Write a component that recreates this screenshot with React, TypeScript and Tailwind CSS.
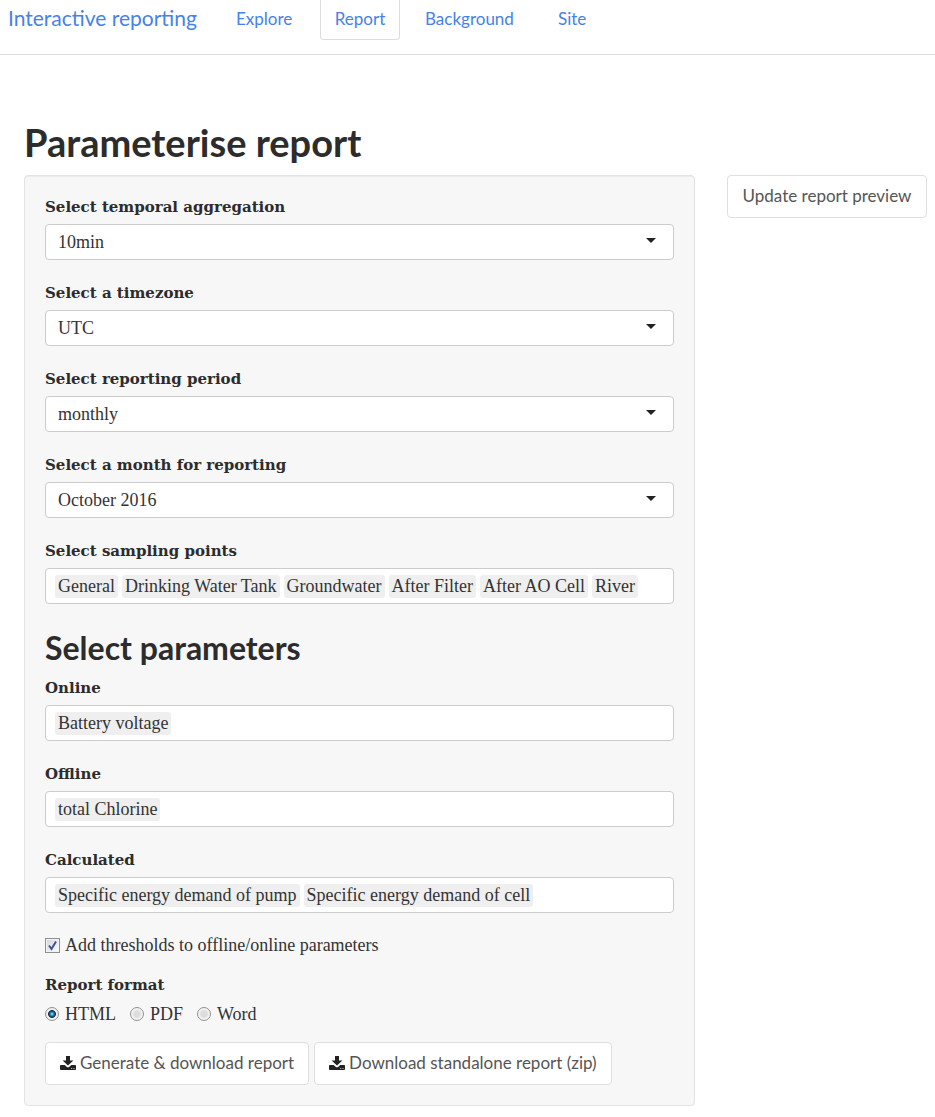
import { useState } from 'react';
import type { ReactNode } from 'react';

const sans = "font-['Lato','Open_Sans',sans-serif]";
const boxStyle = 'rounded-[4px] border border-[#cccccc] bg-white';
const labelStyle = "block font-['DejaVu_Serif',serif] text-[15px] leading-6 font-bold text-[#2c2c2c]";

function SelectField({ id, label, options }: { id: string; label: string; options: string[] }) {
  return (
    <div>
      <label htmlFor={id} className={labelStyle}>{label}</label>
      <div className="relative mt-[5px]">
        <select id={id} className={`block h-9 w-full appearance-none pr-8 pl-3 text-[18px] text-[#333333] ${boxStyle}`}>
          {options.map((o) => <option key={o}>{o}</option>)}
        </select>
        <svg className="pointer-events-none absolute top-3.5 right-[18px]" width="10" height="5" viewBox="0 0 10 5" aria-hidden="true">
          <path d="M0 0h10L5 5z" fill="#222222" />
        </svg>
      </div>
    </div>
  );
}

function TagField({ id, label, tags }: { id: string; label: string; tags: string[] }) {
  return (
    <div>
      <label htmlFor={id} className={labelStyle}>{label}</label>
      <div className={`mt-[5px] flex min-h-9 flex-wrap items-center gap-1 py-1 pr-2 pl-[9px] ${boxStyle}`}>
        {tags.map((t) => (
          <span key={t} className="rounded-[3px] bg-[#efefef] px-[3px] text-[18px] leading-[23px] whitespace-nowrap text-[#333333]">{t}</span>
        ))}
        <input id={id} type="text" className="h-5 w-1 min-w-0 flex-1 bg-transparent outline-none" />
      </div>
    </div>
  );
}

function DownloadIcon() {
  return (
    <svg width="16" height="14" viewBox="0 0 16 14" aria-hidden="true" className="shrink-0">
      <path fill="#222222" d="M6 0h4v4.500h3.400L8 9.600 2.600 4.500H6z" />
      <path fill="#222222" fillRule="evenodd" d="M.8 9h3.900l1.900 1.700a2.100 2.100 0 0 0 2.800 0L11.300 9h3.900c.4 0 .8.4.8.8v3.400c0 .4-.4.8-.8.8H.8a.8.8 0 0 1-.8-.8V9.800C0 9.400.4 9 .8 9zM11.200 12v.8h1V12zM13.500 12v.8h1V12z" />
    </svg>
  );
}

function Button({ children }: { children: ReactNode }) {
  return (
    <button type="button" className={`flex h-[43px] items-center justify-center gap-1 rounded-[4px] border border-[#dfdfdf] bg-white px-3.5 pb-0.5 text-[17px] whitespace-nowrap text-[#555555] ${sans}`}>
      {children}
    </button>
  );
}

export default function App() {
  const [thresholds, setThresholds] = useState(true);
  const [format, setFormat] = useState('HTML');

  return (
    <div className="min-h-screen bg-white pb-3 font-['Liberation_Serif',serif] text-[#333333]">
      <nav className={`flex h-[55px] items-start border-b border-[#dddddd] pl-2 text-[#4582ec] ${sans}`}>
        <a href="#home" className="w-[212px] text-[21px] leading-[35px] whitespace-nowrap">Interactive reporting</a>
        <a href="#explore" className="w-[100px] px-4 text-[17px] leading-[37px]">Explore</a>
        <a href="#report" className="h-10 w-20 rounded-b-[4px] border border-t-0 border-[#dddddd] text-center text-[17px] leading-[37px]">Report</a>
        <a href="#background" className="ml-[9px] w-[133px] px-4 text-[17px] leading-[37px]">Background</a>
        <a href="#site" className="px-4 text-[17px] leading-[37px]">Site</a>
      </nav>

      <main className="pt-16 pr-2 pl-6">
        <h1 className={`text-[38px] leading-[46px] font-bold text-[#2c2c2c] ${sans}`}>Parameterise report</h1>
        <div className="mt-2.5 grid grid-cols-[1fr_200px] items-start gap-8">
          <form className="rounded-[4px] border border-[#e3e3e3] bg-[#f7f7f7] p-5 pt-[19px] shadow-[inset_0_1px_1px_rgba(0,0,0,0.05)]">
            <div className="flex flex-col gap-[21px]">
              <SelectField id="aggregation" label="Select temporal aggregation" options={['10min', 'hourly', 'daily']} />
              <SelectField id="timezone" label="Select a timezone" options={['UTC', 'CET']} />
              <SelectField id="period" label="Select reporting period" options={['monthly', 'yearly']} />
              <SelectField id="month" label="Select a month for reporting" options={['October 2016', 'September 2016']} />
              <TagField id="points" label="Select sampling points" tags={['General', 'Drinking Water Tank', 'Groundwater', 'After Filter', 'After AO Cell', 'River']} />
            </div>

            <h2 className={`mt-6 text-[32px] leading-10 font-bold text-[#2c2c2c] ${sans}`}>Select parameters</h2>
            <div className="mt-2 flex flex-col gap-[21px]">
              <TagField id="online" label="Online" tags={['Battery voltage']} />
              <TagField id="offline" label="Offline" tags={['total Chlorine']} />
              <TagField id="calculated" label="Calculated" tags={['Specific energy demand of pump', 'Specific energy demand of cell']} />
            </div>

            <label className="mt-5 flex items-center gap-[5px] text-[18px] leading-6">
              <span className="relative flex">
                <input
                  type="checkbox"
                  checked={thresholds}
                  onChange={(e) => setThresholds(e.target.checked)}
                  className="peer size-[15px] appearance-none border border-[#8e8f8f] bg-linear-to-br from-[#cfd4da] to-white shadow-[inset_0_0_0_1px_#f4f4f4]"
                />
                <svg className="pointer-events-none absolute inset-0 hidden peer-checked:block" width="15" height="15" viewBox="0 0 15 15" aria-hidden="true">
                  <path d="M4 7.500L6.500 11 11 3.500" fill="none" stroke="#40529c" strokeWidth="2" />
                </svg>
              </span>
              Add thresholds to offline/online parameters
            </label>

            <fieldset className="mt-4">
              <legend className={labelStyle}>Report format</legend>
              <div className="mt-[5px] flex gap-3.5">
                {['HTML', 'PDF', 'Word'].map((f) => (
                  <label key={f} className="flex items-center gap-1.5 text-[18px] leading-6">
                    <input
                      type="radio"
                      name="format"
                      checked={format === f}
                      onChange={() => setFormat(f)}
                      className="size-3.5 appearance-none rounded-full border border-[#929292] bg-[radial-gradient(circle,#dddddd_0_35%,#f4f4f4_60%)] checked:bg-[radial-gradient(circle_at_center,#6cc5e8_0_8%,#12608e_28%,#14324b_42%,#f0f0f0_50%)]"
                    />
                    {f}
                  </label>
                ))}
              </div>
            </fieldset>

            <div className="mt-4 flex flex-wrap gap-[5px]">
              <Button><DownloadIcon />Generate &amp; download report</Button>
              <Button><DownloadIcon />Download standalone report (zip)</Button>
            </div>
          </form>
          <Button>Update report preview</Button>
        </div>
      </main>
    </div>
  );
}
